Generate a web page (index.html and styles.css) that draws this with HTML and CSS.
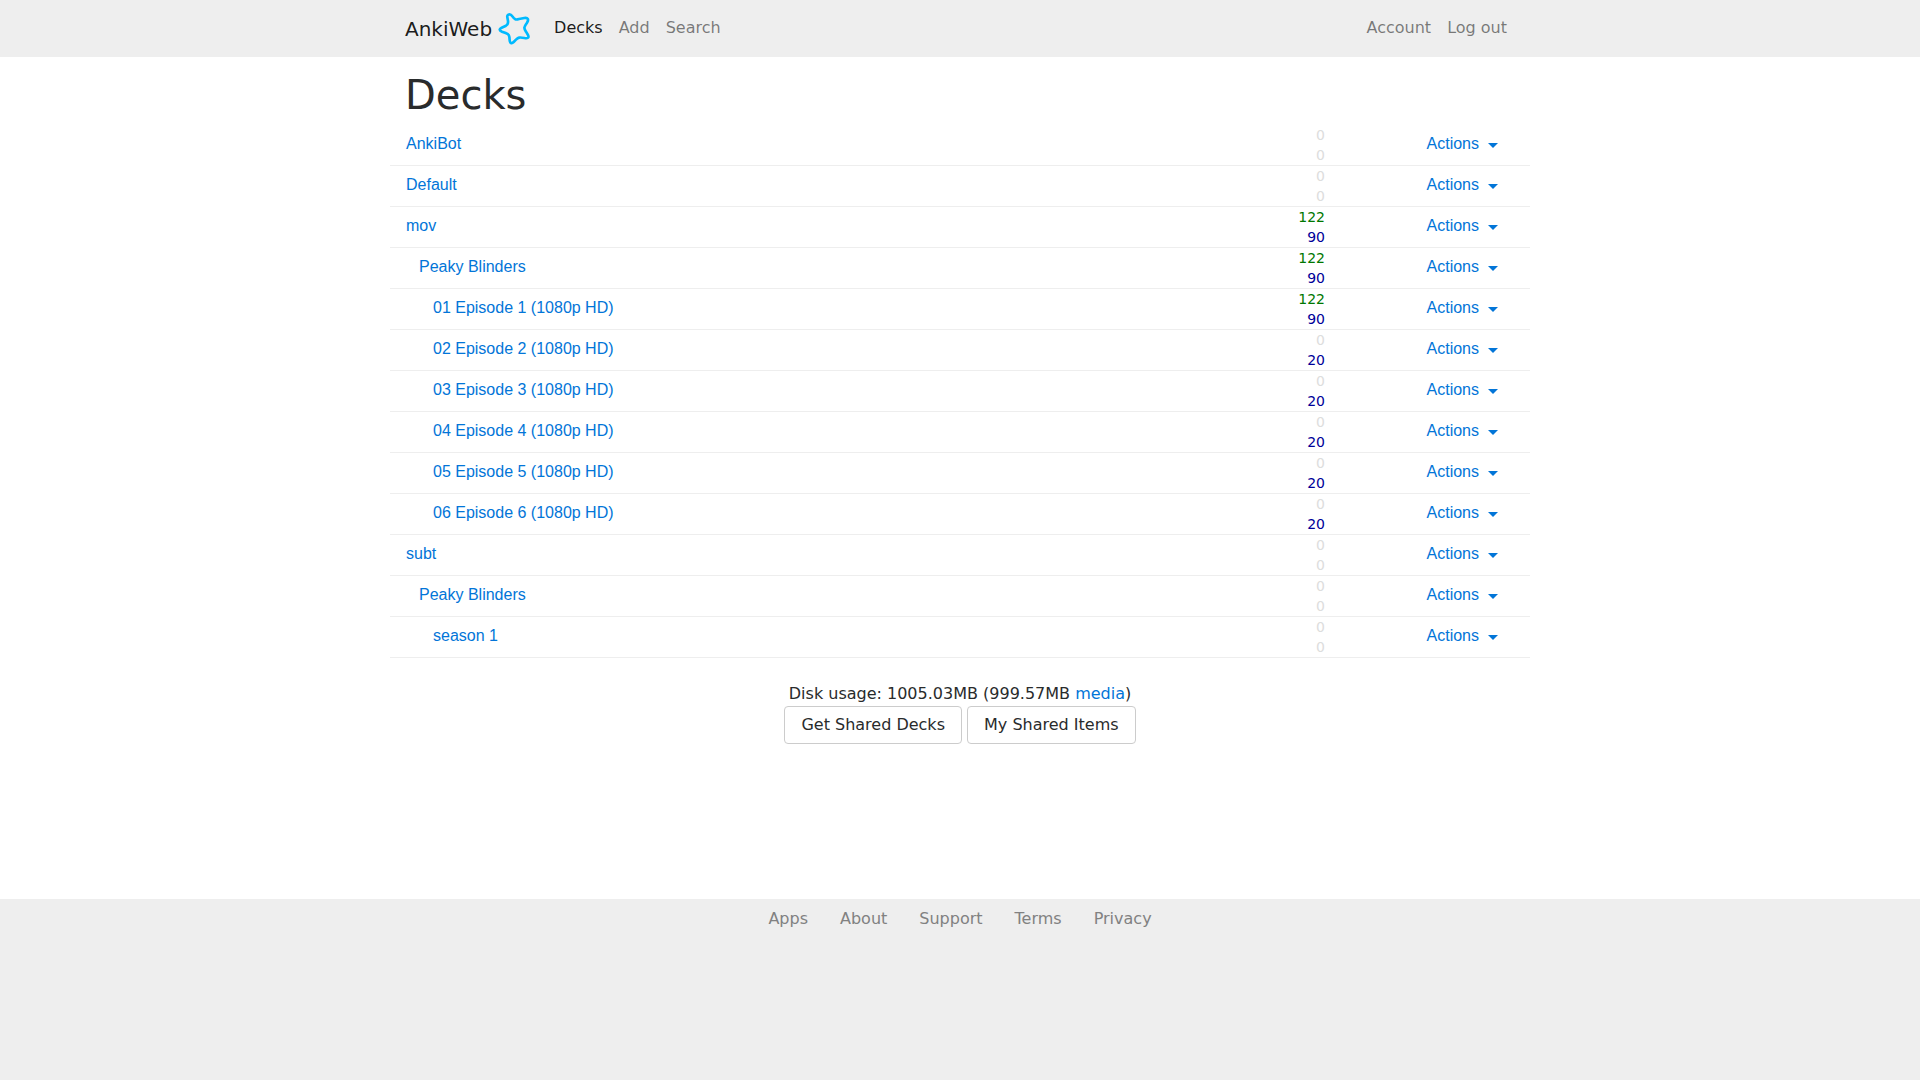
FILE: index.html
```html
<!DOCTYPE html>
<html lang="en">
<head>
<meta charset="utf-8">
<meta name="viewport" content="width=device-width, initial-scale=1">
<title>Decks - AnkiWeb</title>
<link rel="stylesheet" href="styles.css">
</head>
<body>
<header class="navbar">
  <nav class="container navbar-inner" aria-label="Main">
    <a class="brand" href="#">AnkiWeb
      <svg class="brand-logo" viewBox="24 24 96 96" aria-hidden="true"><path d="M52 37C50 27 61 25 67 34C74 44 77 45 87 42L103 39C114 37 117 44 111 53C101 67 101 69 108 80L114 90C118 98 113 101 103 99C88 96 85 97 78 104L71 111C65 117 59 114 59 106C58 90 57 88 47 84L36 80C27 76 27 72 35 68L48 62C55 58 55 55 54 48Z"/></svg>
    </a>
    <div class="nav-links">
      <a class="nav-link active" href="#">Decks</a>
      <a class="nav-link" href="#">Add</a>
      <a class="nav-link" href="#">Search</a>
    </div>
    <div class="nav-links account-links">
      <a class="nav-link" href="#">Account</a>
      <a class="nav-link" href="#">Log out</a>
    </div>
  </nav>
</header>
<main class="container">
  <h1 class="page-title">Decks</h1>
  <table class="decks">
    <colgroup><col><col class="narrow-col"><col class="narrow-col"></colgroup>
    <tbody>
      <tr><td><a href="#">AnkiBot</a></td><td class="counts"><div class="zero">0</div><div class="zero">0</div></td><td class="actions"><button class="action-button" type="button">Actions</button></td></tr>
      <tr><td><a href="#">Default</a></td><td class="counts"><div class="zero">0</div><div class="zero">0</div></td><td class="actions"><button class="action-button" type="button">Actions</button></td></tr>
      <tr><td><a href="#">mov</a></td><td class="counts"><div class="due">122</div><div class="new">90</div></td><td class="actions"><button class="action-button" type="button">Actions</button></td></tr>
      <tr><td><a class="level-1" href="#">Peaky Blinders</a></td><td class="counts"><div class="due">122</div><div class="new">90</div></td><td class="actions"><button class="action-button" type="button">Actions</button></td></tr>
      <tr><td><a class="level-2" href="#">01 Episode 1 (1080p HD)</a></td><td class="counts"><div class="due">122</div><div class="new">90</div></td><td class="actions"><button class="action-button" type="button">Actions</button></td></tr>
      <tr><td><a class="level-2" href="#">02 Episode 2 (1080p HD)</a></td><td class="counts"><div class="zero">0</div><div class="new">20</div></td><td class="actions"><button class="action-button" type="button">Actions</button></td></tr>
      <tr><td><a class="level-2" href="#">03 Episode 3 (1080p HD)</a></td><td class="counts"><div class="zero">0</div><div class="new">20</div></td><td class="actions"><button class="action-button" type="button">Actions</button></td></tr>
      <tr><td><a class="level-2" href="#">04 Episode 4 (1080p HD)</a></td><td class="counts"><div class="zero">0</div><div class="new">20</div></td><td class="actions"><button class="action-button" type="button">Actions</button></td></tr>
      <tr><td><a class="level-2" href="#">05 Episode 5 (1080p HD)</a></td><td class="counts"><div class="zero">0</div><div class="new">20</div></td><td class="actions"><button class="action-button" type="button">Actions</button></td></tr>
      <tr><td><a class="level-2" href="#">06 Episode 6 (1080p HD)</a></td><td class="counts"><div class="zero">0</div><div class="new">20</div></td><td class="actions"><button class="action-button" type="button">Actions</button></td></tr>
      <tr><td><a href="#">subt</a></td><td class="counts"><div class="zero">0</div><div class="zero">0</div></td><td class="actions"><button class="action-button" type="button">Actions</button></td></tr>
      <tr><td><a class="level-1" href="#">Peaky Blinders</a></td><td class="counts"><div class="zero">0</div><div class="zero">0</div></td><td class="actions"><button class="action-button" type="button">Actions</button></td></tr>
      <tr><td><a class="level-2" href="#">season 1</a></td><td class="counts"><div class="zero">0</div><div class="zero">0</div></td><td class="actions"><button class="action-button" type="button">Actions</button></td></tr>
    </tbody>
  </table>
  <div class="summary">
    <p class="usage">Disk usage: 1005.03MB (999.57MB <a href="#">media</a>)</p>
    <button class="button" type="button">Get Shared Decks</button>
    <button class="button" type="button">My Shared Items</button>
  </div>
</main>
<footer class="footer">
  <nav class="footer-links" aria-label="Footer">
    <a href="#">Apps</a>
    <a href="#">About</a>
    <a href="#">Support</a>
    <a href="#">Terms</a>
    <a href="#">Privacy</a>
  </nav>
</footer>
</body>
</html>
```
FILE: styles.css
```css
* { box-sizing: border-box; }

body {
  display: flex;
  flex-direction: column;
  min-height: 100vh;
  margin: 0;
  background: #fff;
  color: #292b2c;
  font: 16px/24px "DejaVu Sans", sans-serif;
}

a { color: #0275d8; text-decoration: none; }

.container {
  width: 100%;
  max-width: 1140px;
  margin: 0 auto;
}

.navbar { background: #eee; }

.navbar-inner {
  display: flex;
  flex-wrap: wrap;
  padding: 8px 15px;
}

.brand {
  display: flex;
  align-items: center;
  gap: 6px;
  height: 41px;
  margin-right: 16px;
  color: rgba(0, 0, 0, .9);
  font-size: 20px;
}

.brand-logo {
  width: 32px;
  height: 32px;
  fill: none;
  stroke: #00baff;
  stroke-width: 8;
  stroke-linejoin: round;
}

.nav-links { display: flex; }
.nav-link { padding: 8px; color: rgba(0, 0, 0, .5); }
.nav-link.active { color: rgba(0, 0, 0, .9); }
.account-links { margin-left: auto; }

.page-title {
  margin: 16px 15px 8px;
  font-size: 40px;
  font-weight: 500;
  line-height: 44px;
}

.decks {
  width: 100%;
  table-layout: fixed;
  border-collapse: separate;
  border-spacing: 0;
  font-family: "Liberation Sans", sans-serif;
}

.narrow-col { width: calc(100% / 6); }

.decks td {
  padding: 0 16px 2px;
  border-bottom: 1px solid #eee;
  vertical-align: middle;
}

.level-1 { padding-left: 13px; }
.level-2 { padding-left: 27px; }

.decks .counts {
  padding: 0 15px;
  font: 14px/20px "DejaVu Sans", sans-serif;
  text-align: right;
}

.zero { color: #ddd; }
.due { color: #070; }
.new { color: #009; }

.actions { text-align: right; }

.action-button {
  display: inline-flex;
  align-items: center;
  gap: 9px;
  height: 38px;
  padding: 0 16px;
  border: 0;
  background: none;
  color: #0275d8;
  font: inherit;
  vertical-align: middle;
}

.action-button::after {
  content: "";
  margin-top: 2px;
  border: 5px solid transparent;
  border-top-color: currentColor;
  border-bottom: 0;
}

.summary {
  margin: 24px 0 155px;
  text-align: center;
}

.usage { margin: 0; }

.button {
  height: 38px;
  padding: 0 16px;
  border: 1px solid #ccc;
  border-radius: 4px;
  background: #fff;
  color: #292b2c;
  font: inherit;
}

.footer {
  flex: 1;
  padding: 8px 16px;
  background: #eee;
}

.footer-links {
  display: flex;
  flex-wrap: wrap;
  justify-content: center;
  gap: 8px 32px;
}

.footer-links a { color: #818181; }
```
